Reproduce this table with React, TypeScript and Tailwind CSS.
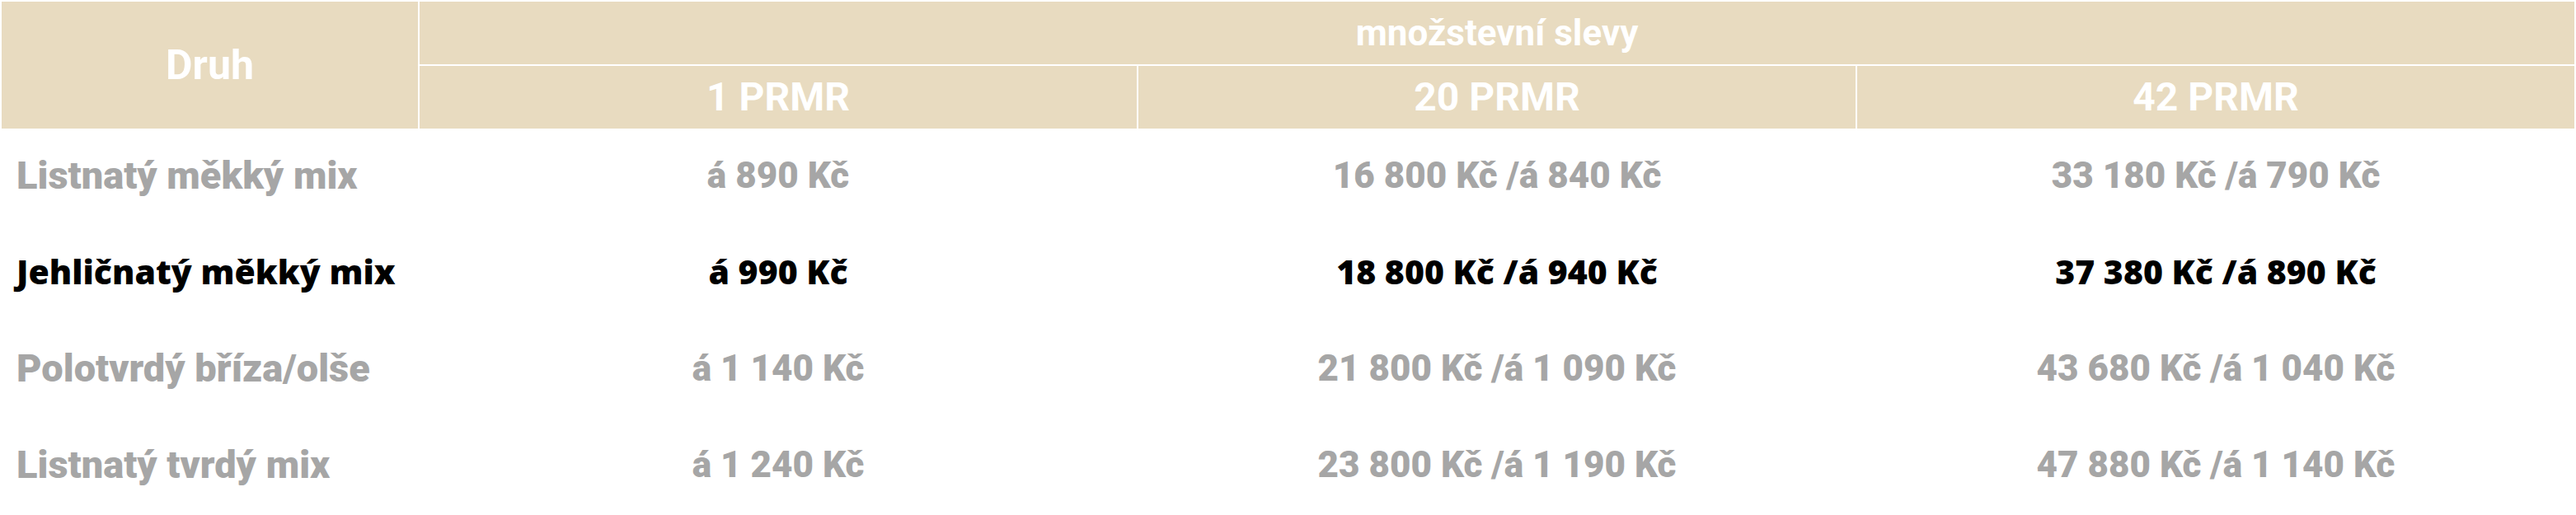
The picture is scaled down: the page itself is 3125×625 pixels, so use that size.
const rows = [
  { name: "Listnatý měkký mix", p1: "á 890 Kč", p20: "16 800 Kč /á 840 Kč", p42: "33 180 Kč /á 790 Kč", dark: false },
  { name: "Jehličnatý měkký mix", p1: "á 990 Kč", p20: "18 800 Kč /á 940 Kč", p42: "37 380 Kč /á 890 Kč", dark: true },
  { name: "Polotvrdý bříza/olše", p1: "á 1 140 Kč", p20: "21 800 Kč /á 1 090 Kč", p42: "43 680 Kč /á 1 040 Kč", dark: false },
  { name: "Listnatý tvrdý mix", p1: "á 1 240 Kč", p20: "23 800 Kč /á 1 190 Kč", p42: "47 880 Kč /á 1 140 Kč", dark: false },
];

const geo = "font-['Roboto','Liberation_Sans',sans-serif] font-black";
const dark = "font-['Open_Sans','Liberation_Sans',sans-serif] font-extrabold";

export default function App() {
  return (
    <div className="w-[3125px] h-[625px] bg-white overflow-hidden">
      <table className="w-full table-fixed border-separate border-spacing-[2px]">
        <colgroup>
          <col className="w-[505px]" />
          <col />
          <col />
          <col />
        </colgroup>
        <thead className={`${geo} text-white`}>
          <tr>
            <th rowSpan={2} className="bg-[#e8dbc0] text-[50px] leading-none align-middle">
              Druh
            </th>
            <th colSpan={3} className="bg-[#e8dbc0] h-[76px] text-[44px] leading-none align-middle">
              množstevní slevy
            </th>
          </tr>
          <tr>
            <th className="bg-[#e8dbc0] h-[76px] text-[48px] leading-none align-middle">1 PRMR</th>
            <th className="bg-[#e8dbc0] h-[76px] text-[48px] leading-none align-middle">20 PRMR</th>
            <th className="bg-[#e8dbc0] h-[76px] text-[48px] leading-none align-middle">42 PRMR</th>
          </tr>
        </thead>
        <tbody>
          {rows.map((r) => {
            const price = r.dark ? "" : "text-[44px]";
            return (
              <tr
                key={r.name}
                className={r.dark ? `${dark} text-black text-[41px]` : `${geo} text-[#a6a6a6] text-[47px]`}
              >
                <td className="h-[115px] pl-[18px] pb-[6px] text-left leading-none align-middle whitespace-nowrap">{r.name}</td>
                <td className={`${price} pb-[6px] text-center leading-none align-middle whitespace-nowrap`}>{r.p1}</td>
                <td className={`${price} pb-[6px] text-center leading-none align-middle whitespace-nowrap`}>{r.p20}</td>
                <td className={`${price} pb-[6px] text-center leading-none align-middle whitespace-nowrap`}>{r.p42}</td>
              </tr>
            );
          })}
        </tbody>
      </table>
    </div>
  );
}
